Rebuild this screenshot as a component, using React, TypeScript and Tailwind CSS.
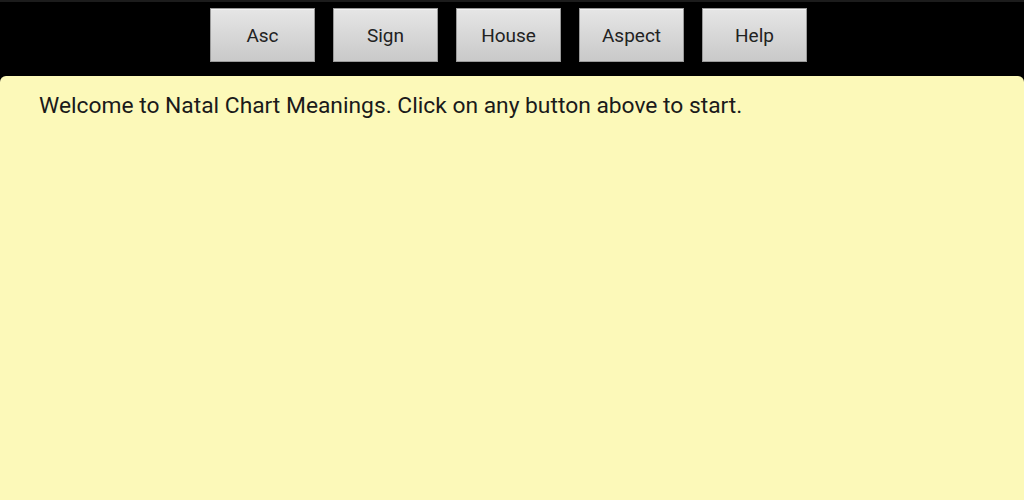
const tabs = ["Asc", "Sign", "House", "Aspect", "Help"]

export default function App() {
  return (
    <div className="w-[1024px] h-[500px] bg-black flex flex-col overflow-hidden" style={{ fontFamily: "Roboto, 'Liberation Sans', sans-serif" }}>
      <div className="h-[76px] shrink-0 flex items-start gap-[18px] pl-[210px] pt-[6px] border-t-2 border-[#1c1c1c]">
        {tabs.map((t) => (
          <button
            key={t}
            className="w-[105px] h-[54px] flex items-center justify-center pt-[3px] border border-[#9a9a9a] bg-gradient-to-b from-[#e6e6e6] to-[#c9c9c9] text-[19px] text-[#222] shadow-[inset_0_1px_0_#f4f4f4]"
          >
            {t}
          </button>
        ))}
      </div>
      <div className="flex-1 bg-[#fcf9b9] rounded-t-[6px] pl-[39px] pt-[16px]">
        <p className="text-[22.8px] text-[#1a1a1a] leading-[28px]">
          Welcome to Natal Chart Meanings. Click on any button above to start.
        </p>
      </div>
    </div>
  )
}
